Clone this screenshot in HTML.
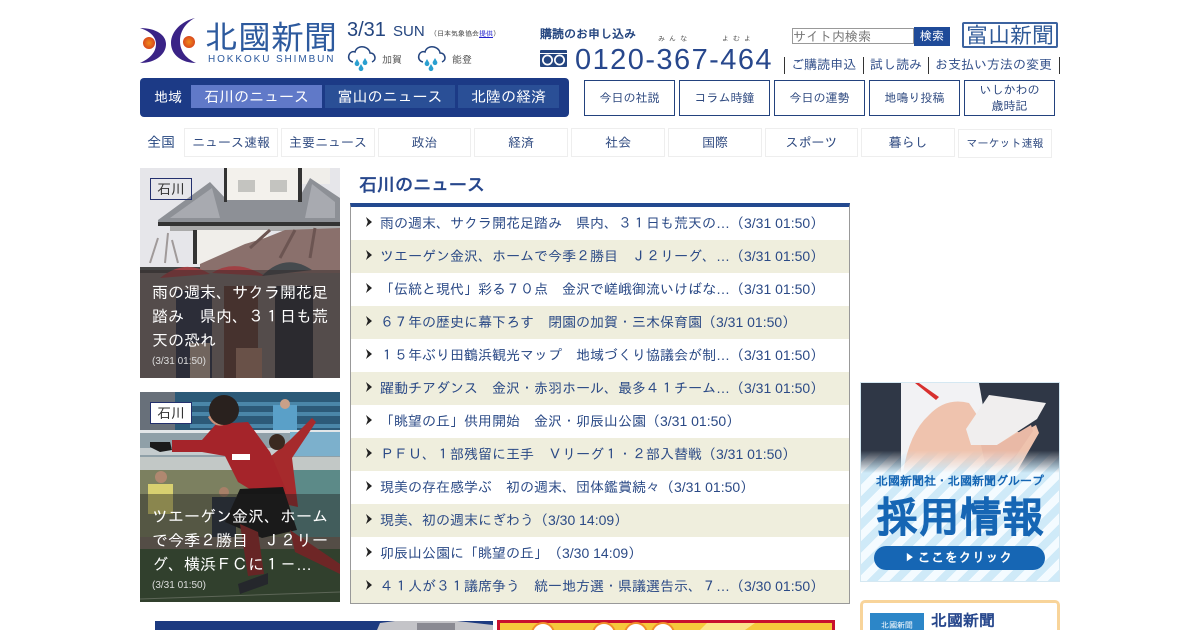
<!DOCTYPE html>
<html lang="ja"><head><meta charset="utf-8"><title>北國新聞</title>
<style>
*{box-sizing:border-box;margin:0;padding:0}
html,body{width:1200px;height:630px;overflow:hidden;background:#fff}
body{position:relative;font-family:"Liberation Sans","IPAGothic",sans-serif;color:#24457f}
.a{position:absolute;white-space:nowrap}
.btn{position:absolute;top:80px;height:36px;width:91px;border:1px solid #23427e;text-align:center;font-size:12px;line-height:35px;color:#2f4a80}
.sub{position:absolute;top:128px;height:29px;border:1px solid #eee;text-align:center;font-size:13px;line-height:28px;color:#2f4a80}
.tab{position:absolute;top:85px;height:23px;background:#2a4f96;color:#fff;text-align:center;font-size:15px;line-height:25px}
.row{position:absolute;left:351px;width:498px;height:33px;font-size:14px;line-height:33px;padding:0 0 0 29px;color:#2b4a86;white-space:nowrap}
.row::before{content:"";position:absolute;left:15px;top:10px;width:6px;height:10px;background:#222;clip-path:polygon(0 0,100% 50%,0 100%,30% 50%)}
.w{background:#fff}.b{background:#efeedd}
.cap{position:absolute;left:0;width:200px;background:rgba(50,40,40,.5);color:#fff;font-size:16px;line-height:24px;padding:12px 12px 0;white-space:normal}
.cap small{display:block;font-size:10px;line-height:16px;color:#ddd}
.tag{position:absolute;left:10px;top:10px;width:42px;height:22px;border:1px solid #23306e;font-size:14px;line-height:21px;text-align:center;color:#333}
.lk{position:absolute;top:57px;height:17px;border-left:1px solid #333;font-size:13px;line-height:16px;color:#33508a;white-space:nowrap}
</style></head><body>

<!-- logo -->
<svg class="a" style="left:138px;top:15px" width="62" height="52" viewBox="0 0 62 52">
<defs><radialGradient id="o"><stop offset="0" stop-color="#f08a1c"/><stop offset="1" stop-color="#d9481c"/></radialGradient></defs>
<path d="M2 13C18 13 28 20 28 29C28 39 18 48 2 48C11 44 18 38 18 29C18 21 11 16 2 13Z" fill="#3a2386"/>
<path d="M57 3C44 6 33 16 33 28C33 40 44 48 58 48C49 44 42 37 42 26C42 15 49 7 57 3Z" fill="#3a2386"/>
<circle cx="51" cy="27" r="6" fill="url(#o)"/><circle cx="11" cy="28" r="6" fill="url(#o)"/>
</svg>
<div class="a" style="left:205px;top:18px;font-size:33px;line-height:40px;color:#2d5a9e">北國新聞</div>
<div class="a" style="left:208px;top:54px;font-size:10px;line-height:12px;letter-spacing:1.9px;color:#2d5a9e">HOKKOKU SHIMBUN</div>

<!-- date + weather -->
<div class="a" style="left:347px;top:18px;font-size:20px;line-height:24px">3/31</div>
<div class="a" style="left:393px;top:23px;font-size:15px;line-height:18px">SUN</div>
<div class="a" style="left:430px;top:30px;font-size:7px;line-height:10px;color:#444">（日本気象協会<span style="color:#22c;text-decoration:underline">提供</span>）</div>
<svg class="a" style="left:347px;top:44px" width="30" height="28" viewBox="0 0 30 28"><path d="M6 18C2 17 1 14 2 11C3 8 6 7 8 8C9 4 13 2 17 3C21 4 23 7 23 9C26 9 28 11 28 14C28 16 27 17 25 18" fill="none" stroke="#24457f" stroke-width="1.5"/><path d="M10 15l2.3 4a2.4 2.4 0 1 1-4.6 0zM18 14l2.3 4a2.4 2.4 0 1 1-4.6 0zM14 20l2.3 4a2.4 2.4 0 1 1-4.6 0z" fill="#2a9fd0"/></svg>
<div class="a" style="left:382px;top:54px;font-size:10px;line-height:14px;color:#555">加賀</div>
<svg class="a" style="left:417px;top:44px" width="30" height="28" viewBox="0 0 30 28"><path d="M6 18C2 17 1 14 2 11C3 8 6 7 8 8C9 4 13 2 17 3C21 4 23 7 23 9C26 9 28 11 28 14C28 16 27 17 25 18" fill="none" stroke="#24457f" stroke-width="1.5"/><path d="M10 15l2.3 4a2.4 2.4 0 1 1-4.6 0zM18 14l2.3 4a2.4 2.4 0 1 1-4.6 0zM14 20l2.3 4a2.4 2.4 0 1 1-4.6 0z" fill="#2a9fd0"/></svg>
<div class="a" style="left:452px;top:54px;font-size:10px;line-height:14px;color:#555">能登</div>

<!-- phone -->
<div class="a" style="left:540px;top:26px;font-size:12px;font-weight:bold;line-height:16px;color:#24457f">購読のお申し込み</div>
<div class="a" style="left:658px;top:35px;font-size:7px;line-height:9px;letter-spacing:4px;color:#555">みんな</div>
<div class="a" style="left:722px;top:35px;font-size:7px;line-height:9px;letter-spacing:4px;color:#555">よむよ</div>
<svg class="a" style="left:540px;top:49px" width="30" height="20" viewBox="0 0 30 20"><rect x="0" y="1" width="27" height="17" rx="1" fill="#24457f"/><rect x="0" y="4" width="27" height="1" fill="#fff"/><circle cx="7.5" cy="11" r="5.5" fill="#fff"/><circle cx="19.5" cy="11" r="5.5" fill="#fff"/><circle cx="7.5" cy="11" r="3.8" fill="#24457f"/><circle cx="19.5" cy="11" r="3.8" fill="#24457f"/></svg>
<div class="a" style="left:575px;top:43px;font-size:29px;line-height:34px;letter-spacing:1.45px;color:#27478c">0120-367-464</div>

<!-- search -->
<div class="a" style="left:792px;top:28px;width:122px;height:16px;border:1px solid #999;font-size:13px;line-height:15px;color:#777">サイト内検索</div>
<div class="a" style="left:914px;top:27px;width:36px;height:19px;background:#1f4a98;color:#fff;font-size:12px;line-height:19px;text-align:center">検索</div>
<div class="a" style="left:962px;top:22px;width:96px;height:26px;border:2px solid #3c63a0;border-radius:2px;font-size:22px;line-height:24px;text-align:center;color:#2f5a98">富山新聞</div>

<div class="lk" style="left:784px;padding-left:6px">ご購読申込</div>
<div class="lk" style="left:863px;padding-left:6px">試し読み</div>
<div class="lk" style="left:928px;padding-left:6px">お支払い方法の変更</div>
<div class="lk" style="left:1059px"></div>

<!-- region nav -->
<div class="a" style="left:140px;top:78px;width:429px;height:39px;background:#1c3a86;border-radius:4px"></div>
<div class="a" style="left:154px;top:88px;font-size:14px;line-height:18px;color:#fff">地域</div>
<div class="tab" style="left:191px;width:131px;background:#6079c8">石川のニュース</div>
<div class="tab" style="left:325px;width:130px">富山のニュース</div>
<div class="tab" style="left:458px;width:101px">北陸の経済</div>

<div class="btn" style="left:584px">今日の社説</div>
<div class="btn" style="left:679px">コラム時鐘</div>
<div class="btn" style="left:774px">今日の運勢</div>
<div class="btn" style="left:869px">地鳴り投稿</div>
<div class="btn" style="left:964px;line-height:16px;padding-top:1px">いしかわの<br>歳時記</div>

<!-- sub nav -->
<div class="a" style="left:147px;top:134px;font-size:14px;line-height:16px">全国</div>
<div class="sub" style="left:184px;width:94px">ニュース速報</div>
<div class="sub" style="left:281px;width:94px">主要ニュース</div>
<div class="sub" style="left:378px;width:93px">政治</div>
<div class="sub" style="left:474px;width:94px">経済</div>
<div class="sub" style="left:571px;width:94px">社会</div>
<div class="sub" style="left:668px;width:94px">国際</div>
<div class="sub" style="left:765px;width:93px">スポーツ</div>
<div class="sub" style="left:861px;width:94px">暮らし</div>
<div class="sub" style="left:958px;top:129px;width:94px;font-size:11px">マーケット速報</div>

<!-- photo 1 -->
<div class="a" style="left:140px;top:168px;width:200px;height:210px;overflow:hidden;background:#e4e4e6">
<svg width="200" height="210" style="position:absolute;left:0;top:0" viewBox="0 0 200 210">
<rect width="200" height="210" fill="#e6e6ea"/>
<rect x="162" y="0" width="28" height="16" fill="#f0eeea"/>
<path d="M18 52L70 14 87 32H158L170 10 200 30V56H18Z" fill="#8d9096"/>
<path d="M30 50L72 20 80 50ZM165 50L172 16 195 34 195 50Z" fill="#a8aab0"/>
<rect x="87" y="0" width="71" height="32" fill="#f3f1ec"/><rect x="84" y="0" width="3" height="34" fill="#333"/><rect x="158" y="0" width="4" height="34" fill="#333"/>
<rect x="98" y="12" width="17" height="12" fill="#c4c4c0"/><rect x="130" y="12" width="17" height="12" fill="#c4c4c0"/>
<rect x="18" y="54" width="182" height="4" fill="#333"/>
<rect x="30" y="58" width="170" height="5" fill="#aaa"/>
<rect x="53" y="62" width="75" height="34" fill="#f0eeea"/><rect x="53" y="62" width="4" height="34" fill="#333"/>
<path d="M60 96L105 76 125 70 145 62 200 60V115H60Z" fill="#8a706c"/>
<path d="M10 95L18 70M25 95L28 65M38 95L32 72" stroke="#a09a9a" stroke-width="2"/>
<path d="M110 80L130 62M140 90L155 62M170 90L175 60" stroke="#6c5552" stroke-width="3"/>
<rect y="99" width="60" height="6" fill="#444"/>
<rect y="105" width="200" height="105" fill="#77716e"/>
<path d="M20 110Q45 90 70 106ZM72 105Q95 90 125 108Z" fill="#a04044"/>
<path d="M122 108Q145 84 172 102Z" fill="#454a4e"/>
<rect x="36" y="122" width="36" height="88" fill="#263248"/><rect x="84" y="118" width="34" height="92" fill="#5a3c34"/><rect x="135" y="118" width="38" height="92" fill="#242c36"/>
<rect x="50" y="175" width="20" height="35" fill="#b0a294"/><rect x="96" y="180" width="26" height="30" fill="#a07a68"/>
</svg>
<div class="cap" style="top:102px;height:108px">雨の週末、サクラ開花足踏み　県内、３１日も荒天の恐れ<small>(3/31 01:50)</small></div>
<div class="tag">石川</div>
</div>

<!-- photo 2 -->
<div class="a" style="left:140px;top:392px;width:200px;height:210px;overflow:hidden;background:#456">
<svg width="200" height="210" style="position:absolute;left:0;top:0" viewBox="0 0 200 210">
<rect width="200" height="40" fill="#2c5a78"/>
<rect x="50" y="10" width="150" height="4" fill="#4a86a8"/><rect x="50" y="20" width="150" height="4" fill="#4a86a8"/><rect x="50" y="32" width="150" height="4" fill="#4a86a8"/>
<rect x="0" y="0" width="35" height="40" fill="#68707a"/>
<rect x="133" y="13" width="24" height="26" fill="#5aa0c8"/><circle cx="145" cy="12" r="5" fill="#c9a088"/>
<rect y="38" width="200" height="27" fill="#8fa0a8"/><rect y="38" width="200" height="3" fill="#e2e6e8"/><rect y="56" width="200" height="7" fill="#c4ccce"/>
<rect x="150" y="40" width="50" height="24" fill="#7cb0cc"/>
<rect y="65" width="200" height="13" fill="#c2c8c6"/>
<rect y="78" width="150" height="67" fill="#7c8060"/><rect x="150" y="78" width="50" height="67" fill="#5c8a88"/>
<rect y="145" width="200" height="12" fill="#7a6e62"/>
<rect y="157" width="200" height="53" fill="#3e5838"/>
<path d="M0 207L200 200" stroke="#8a9a80" stroke-width="1"/>
<rect x="8" y="92" width="25" height="30" fill="#d8d070"/><circle cx="21" cy="85" r="6" fill="#b08870"/>
<rect x="72" y="105" width="24" height="40" fill="#2c3440"/><circle cx="84" cy="100" r="5" fill="#a88068"/>
<path d="M172 26L176 30 152 66 158 115 135 110 130 65 150 48Z" fill="#a62a2c"/><circle cx="137" cy="50" r="8" fill="#3a2a20"/>
<path d="M10 50H30L32 58 20 60 10 55Z" fill="#1a1a1a"/>
<path d="M32 48L62 48 76 32 108 30 130 60 146 98 118 102 98 90 85 64 62 60 32 60Z" fill="#a5242a"/>
<path d="M68 25C72 32 78 36 86 32L78 18Z" fill="#c99078"/>
<circle cx="84" cy="18" r="15" fill="#29211e"/>
<path d="M100 97L143 95 157 138 122 146 85 130Z" fill="#171717"/>
<path d="M100 132L118 140 124 182 108 184Z" fill="#9a2a2a"/>
<path d="M98 192L128 181 128 192 100 202Z" fill="#2a2e36"/>
<path d="M150 138L200 172V182L155 160Z" fill="#a82c2c"/>
<path d="M92 62H110V68H92Z" fill="#fff"/>
</svg>
<div class="cap" style="top:102px;height:108px;background:rgba(30,30,30,.42)">ツエーゲン金沢、ホームで今季２勝目　Ｊ２リーグ、横浜ＦＣに１－…<small>(3/31 01:50)</small></div>
<div class="tag" style="background:#fff">石川</div>
</div>

<!-- news list -->
<div class="a" style="left:359px;top:175px;font-size:18px;font-weight:bold;line-height:20px;color:#27478c">石川のニュース</div>
<div class="a" style="left:350px;top:203px;width:500px;height:401px;border:1px solid #999;border-top:4px solid #23498f"></div>
<div class="row w" style="top:207px">雨の週末、サクラ開花足踏み　県内、３１日も荒天の…（3/31 01:50）</div>
<div class="row b" style="top:240px">ツエーゲン金沢、ホームで今季２勝目　Ｊ２リーグ、…（3/31 01:50）</div>
<div class="row w" style="top:273px">「伝統と現代」彩る７０点　金沢で嵯峨御流いけばな…（3/31 01:50）</div>
<div class="row b" style="top:306px">６７年の歴史に幕下ろす　閉園の加賀・三木保育園（3/31 01:50）</div>
<div class="row w" style="top:339px">１５年ぶり田鶴浜観光マップ　地域づくり協議会が制…（3/31 01:50）</div>
<div class="row b" style="top:372px">躍動チアダンス　金沢・赤羽ホール、最多４１チーム…（3/31 01:50）</div>
<div class="row w" style="top:405px">「眺望の丘」供用開始　金沢・卯辰山公園（3/31 01:50）</div>
<div class="row b" style="top:438px">ＰＦＵ、１部残留に王手　Ｖリーグ１・２部入替戦（3/31 01:50）</div>
<div class="row w" style="top:471px">現美の存在感学ぶ　初の週末、団体鑑賞続々（3/31 01:50）</div>
<div class="row b" style="top:504px">現美、初の週末にぎわう（3/30 14:09）</div>
<div class="row w" style="top:537px">卯辰山公園に「眺望の丘」（3/30 14:09）</div>
<div class="row b" style="top:570px">４１人が３１議席争う　統一地方選・県議選告示、７…（3/30 01:50）</div>

<!-- bottom banners -->
<svg class="a" style="left:155px;top:620px" width="680" height="10" viewBox="0 0 680 10">
<rect y="1" width="338" height="9" fill="#1c3a80"/>
<path d="M225 3L240 1H302L338 5V10H222Z" fill="#c4c4c8"/>
<path d="M262 3H300V10H262Z" fill="#8a8a92"/>
<rect x="342" width="338" height="10" fill="#c8102e"/>
<rect x="345" y="3" width="332" height="7" fill="#f6c83c"/>
<circle cx="388" cy="14" r="11" fill="#fff" stroke="#f0902a" stroke-width="2"/><circle cx="449" cy="14" r="11" fill="#fff" stroke="#f0902a" stroke-width="2"/><circle cx="481" cy="14" r="11" fill="#fff" stroke="#f0902a" stroke-width="2"/><circle cx="508" cy="14" r="11" fill="#fff" stroke="#f0902a" stroke-width="2"/>
<path d="M552 3H600L590 10H545Z" fill="#fbe58c"/>
</svg>

<!-- recruit banner -->
<div class="a" style="left:860px;top:382px;width:200px;height:200px;overflow:hidden;border:1px solid #d5e8f2;background:repeating-linear-gradient(135deg,#cfeaf8 0 8px,#f4fbff 8px 16px)">
<svg width="198" height="90" style="position:absolute;left:0;top:0" viewBox="0 0 198 90">
<defs><linearGradient id="f" x1="0" y1="0" x2="0" y2="1"><stop offset=".75" stop-color="#fff"/><stop offset="1" stop-color="#000"/></linearGradient><mask id="m"><rect width="198" height="90" fill="url(#f)"/></mask></defs>
<g mask="url(#m)">
<rect width="198" height="90" fill="#2f3746"/>
<path d="M40 0H118L125 40 118 90H40Z" fill="#f2f2f4"/>
<path d="M42 90Q48 50 68 32 85 14 108 20L118 35 160 50 175 42 178 50 155 90Z" fill="#efc3ae"/>
<path d="M105 46L128 12 185 20 176 36 136 62 110 62Z" fill="#f0eeee"/>
<path d="M120 62L136 62 170 42 172 48 150 80 125 85Z" fill="#e9b9a6"/>
<path d="M58 0L78 14 75 17 54 0Z" fill="#d8302e"/>
</g>
</svg>
<div style="position:absolute;left:0;right:0;top:90px;text-align:center;font-size:12px;font-weight:bold;line-height:16px;color:#1666b4;white-space:nowrap">北國新聞社・北國新聞グループ</div>
<div style="position:absolute;left:0;right:0;top:110px;text-align:center;font-size:42px;font-weight:bold;line-height:50px;color:#1666b4;white-space:nowrap;-webkit-text-stroke:.6px #1666b4">採用情報</div>
<div style="position:absolute;left:13px;top:163px;width:171px;height:24px;border-radius:12px;background:#1666b4;color:#fff;text-align:center;font-size:13px;font-weight:bold;line-height:24px;letter-spacing:.6px">▶ ここをクリック</div>
</div>

<!-- paper box -->
<div class="a" style="left:860px;top:600px;width:200px;height:50px;border:3px solid #f8d49a;border-radius:5px"></div>
<div class="a" style="left:870px;top:613px;width:54px;height:17px;background:#2c86c8;color:#fff;font-size:8px;line-height:26px;text-align:center">北國新聞</div>
<div class="a" style="left:931px;top:612px;font-size:16px;font-weight:bold;line-height:20px;color:#27478c">北國新聞</div>
</body></html>
